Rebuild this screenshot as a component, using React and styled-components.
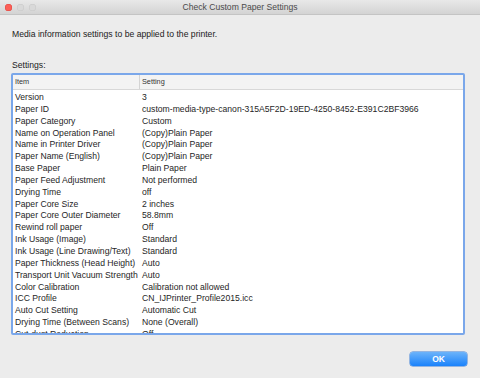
import React from "react";
import styled, { createGlobalStyle } from "styled-components";

const Global = createGlobalStyle`
  html, body { margin: 0; padding: 0; background: #ececec; }
  body { font-family: "Liberation Sans", Arial, sans-serif; color: #222; }
`;

const Window = styled.div`
  width: 480px;
  height: 378px;
  display: flex;
  flex-direction: column;
  background: #ececec;
  overflow: hidden;
`;

const TitleBar = styled.div`
  height: 14px;
  flex: none;
  display: flex;
  align-items: center;
  position: relative;
  background: linear-gradient(#e8e8e8, #d3d3d3);
  border-bottom: 1px solid #c4c4c4;
`;

const Lights = styled.div`
  display: flex;
  gap: 5px;
  padding-left: 5px;
`;

const Light = styled.span`
  width: 7px;
  height: 7px;
  border-radius: 50%;
  background: ${(p) => p.$color};
  box-shadow: inset 0 0 0 0.5px ${(p) => p.$edge};
`;

const Title = styled.div`
  position: absolute;
  left: 0;
  right: 0;
  text-align: center;
  font-size: 8.6px;
  color: #4a4a4a;
`;

const Body = styled.div`
  flex: 1;
  display: flex;
  flex-direction: column;
  padding: 13px 11px 0 11px;
`;

const Intro = styled.p`
  margin: 0 0 0 1px;
  font-size: 8.65px;
  line-height: 12px;
`;

const Label = styled.div`
  margin: 20px 0 2px 1px;
  font-size: 8.65px;
  line-height: 11px;
`;

const ListFrame = styled.div`
  width: 454px;
  height: 262px;
  border: 2px solid #7aa7ea;
  border-radius: 2px;
  background: #fff;
  overflow: hidden;
  box-sizing: border-box;
`;

const Header = styled.div`
  display: grid;
  grid-template-columns: 126px 1fr;
  height: 14px;
  background: #f3f3f3;
  border-bottom: 1px solid #d8d8d8;
  font-size: 7.3px;
  line-height: 14px;
  color: #333;
`;

const HeadCell = styled.div`
  padding-left: 2px;
  border-left: ${(p) => (p.$first ? "none" : "1px solid #d4d4d4")};
`;

const Rows = styled.div`
  padding-top: 2px;
`;

const Row = styled.div`
  display: grid;
  grid-template-columns: 127px 1fr;
  height: 11.85px;
  font-size: 8.65px;
  line-height: 11.85px;
  white-space: nowrap;
  color: #262626;
`;

const Cell = styled.div`
  padding-left: 2px;
  overflow: hidden;
`;

const Footer = styled.div`
  display: flex;
  justify-content: flex-end;
  padding: 17px 2px 0 0;
`;

const OkButton = styled.button`
  width: 57px;
  height: 14px;
  border: none;
  border-radius: 3px;
  background: linear-gradient(#6cb3fa, #1a82fb);
  box-shadow: 0 0 0 0.5px #3d7fd6;
  color: #fff;
  font-family: "Liberation Sans", Arial, sans-serif;
  font-weight: bold;
  font-size: 8.5px;
  padding: 0;
`;

const settings = [
  ["Version", "3"],
  ["Paper ID", "custom-media-type-canon-315A5F2D-19ED-4250-8452-E391C2BF3966"],
  ["Paper Category", "Custom"],
  ["Name on Operation Panel", "(Copy)Plain Paper"],
  ["Name in Printer Driver", "(Copy)Plain Paper"],
  ["Paper Name (English)", "(Copy)Plain Paper"],
  ["Base Paper", "Plain Paper"],
  ["Paper Feed Adjustment", "Not performed"],
  ["Drying Time", "off"],
  ["Paper Core Size", "2 inches"],
  ["Paper Core Outer Diameter", "58.8mm"],
  ["Rewind roll paper", "Off"],
  ["Ink Usage (Image)", "Standard"],
  ["Ink Usage (Line Drawing/Text)", "Standard"],
  ["Paper Thickness (Head Height)", "Auto"],
  ["Transport Unit Vacuum Strength", "Auto"],
  ["Color Calibration", "Calibration not allowed"],
  ["ICC Profile", "CN_IJPrinter_Profile2015.icc"],
  ["Auto Cut Setting", "Automatic Cut"],
  ["Drying Time (Between Scans)", "None (Overall)"],
  ["Cut-dust Reduction", "Off"],
];

export default function App() {
  return (
    <Window>
      <Global />
      <TitleBar>
        <Lights>
          <Light $color="#fc5f57" $edge="#e0443e" />
          <Light $color="#d9d9d9" $edge="#c8c8c8" />
          <Light $color="#d9d9d9" $edge="#c8c8c8" />
        </Lights>
        <Title>Check Custom Paper Settings</Title>
      </TitleBar>
      <Body>
        <Intro>Media information settings to be applied to the printer.</Intro>
        <Label>Settings:</Label>
        <ListFrame>
          <Header>
            <HeadCell $first>Item</HeadCell>
            <HeadCell>Setting</HeadCell>
          </Header>
          <Rows>
            {settings.map(([item, value]) => (
              <Row key={item}>
                <Cell>{item}</Cell>
                <Cell>{value}</Cell>
              </Row>
            ))}
          </Rows>
        </ListFrame>
        <Footer>
          <OkButton>OK</OkButton>
        </Footer>
      </Body>
    </Window>
  );
}
